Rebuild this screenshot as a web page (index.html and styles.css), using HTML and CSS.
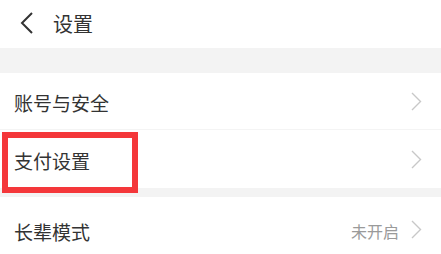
FILE: index.html
```html
<!DOCTYPE html>
<html lang="zh">
<head>
<meta charset="utf-8">
<link rel="stylesheet" href="styles.css">
</head>
<body>
<div class="page">
  <header class="header">
    <svg class="back" width="14" height="22" viewBox="0 0 14 22"><path d="M12 1 L2 11 L12 21" fill="none" stroke="#333" stroke-width="2"/></svg>
    <span class="title">设置</span>
  </header>
  <div class="gap gap-top"></div>
  <div class="row row-divided">
    <span class="label">账号与安全</span>
    <span class="right"><svg class="chev" width="11" height="19" viewBox="0 0 11 19"><path d="M1 1 L9.5 9.5 L1 18" fill="none" stroke="#c8c8c8" stroke-width="1.4"/></svg></span>
  </div>
  <div class="row highlight-wrap">
    <span class="label">支付设置</span>
    <span class="right"><svg class="chev" width="11" height="19" viewBox="0 0 11 19"><path d="M1 1 L9.5 9.5 L1 18" fill="none" stroke="#c8c8c8" stroke-width="1.4"/></svg></span>
    <div class="highlight"></div>
  </div>
  <div class="gap gap-mid"></div>
  <div class="row row-last">
    <span class="label">长辈模式</span>
    <span class="right"><span class="value">未开启</span><svg class="chev" width="11" height="19" viewBox="0 0 11 19"><path d="M1 1 L9.5 9.5 L1 18" fill="none" stroke="#c8c8c8" stroke-width="1.4"/></svg></span>
  </div>
</div>
</body>
</html>
```
FILE: styles.css
```css
* { box-sizing: border-box; }
html, body { margin: 0; padding: 0; background: #fff; }
body {
  font-family: "Noto Sans CJK SC", "Noto Sans", sans-serif;
  color: #333;
  width: 441px;
  height: 254px;
  overflow: hidden;
}
.page { display: flex; flex-direction: column; }
.header {
  height: 48px;
  display: flex;
  align-items: center;
  padding-left: 20px;
}
.back { display: block; margin-top: -2px; }
.title {
  font-size: 20px;
  margin-left: 19px;
  line-height: 1;
  margin-top: -1px;
}
.gap { background: #f3f3f3; }
.gap-top { height: 25px; }
.gap-mid { height: 9px; }
.row {
  height: 57px;
  display: flex;
  align-items: center;
  justify-content: space-between;
  padding: 3px 19px 0 14px;
  position: relative;
}
.row-divided { border-bottom: 1px solid #f4f4f4; height: 57px; }
.highlight-wrap { height: 58px; }
.row-last { padding-top: 6px; height: 62px; }
.label { font-size: 19px; line-height: 1; }
.right { display: flex; align-items: center; }
.value { font-size: 16px; color: #9a9a9a; margin-right: 12px; line-height: 1; }
.chev { display: block; margin-top: -3px; }
.highlight {
  position: absolute;
  left: 2px;
  top: 2px;
  width: 136px;
  height: 61px;
  border: 6px solid #f4373a;
}
```
